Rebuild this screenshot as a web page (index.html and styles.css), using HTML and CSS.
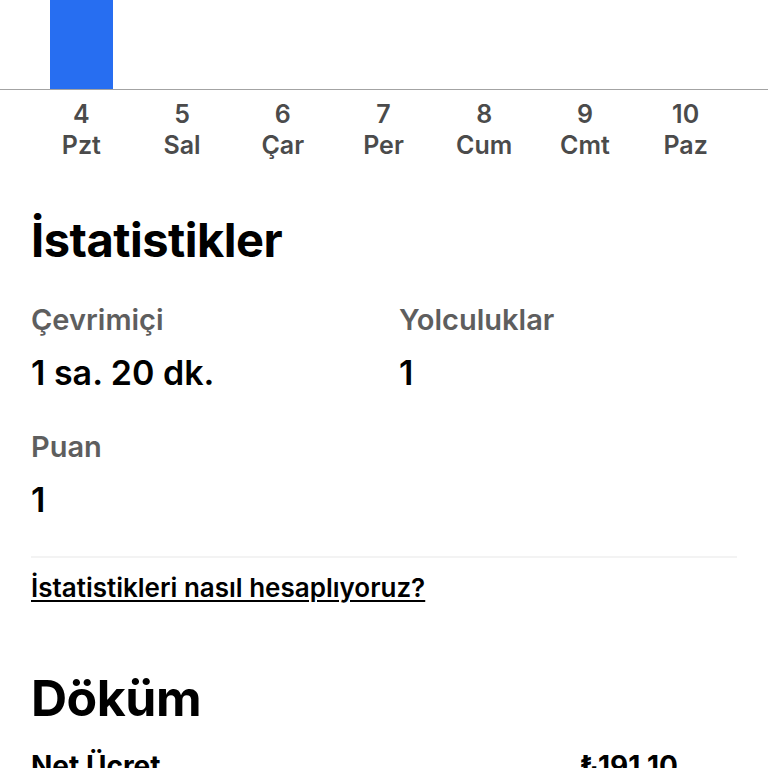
FILE: index.html
```html
<!DOCTYPE html>
<html lang="tr">
<head>
<meta charset="utf-8">
<link rel="stylesheet" href="styles.css">
</head>
<body>
<div class="chart">
  <div class="plot">
    <div class="col"><div class="bar" style="height:90px"></div></div>
    <div class="col"></div>
    <div class="col"></div>
    <div class="col"></div>
    <div class="col"></div>
    <div class="col"></div>
    <div class="col"></div>
  </div>
  <div class="axis">
    <div class="tick"><span>4</span><span>Pzt</span></div>
    <div class="tick"><span>5</span><span>Sal</span></div>
    <div class="tick"><span>6</span><span>Çar</span></div>
    <div class="tick"><span>7</span><span>Per</span></div>
    <div class="tick"><span>8</span><span>Cum</span></div>
    <div class="tick"><span>9</span><span>Cmt</span></div>
    <div class="tick"><span>10</span><span>Paz</span></div>
  </div>
</div>
<section class="stats">
  <h2 class="title">İstatistikler</h2>
  <div class="grid">
    <div class="stat"><div class="label">Çevrimiçi</div><div class="value">1 sa. 20 dk.</div></div>
    <div class="stat"><div class="label">Yolculuklar</div><div class="value">1</div></div>
    <div class="stat"><div class="label">Puan</div><div class="value">1</div></div>
  </div>
  <hr class="divider">
  <a class="link" href="#">İstatistikleri nasıl hesaplıyoruz?</a>
</section>
<section class="breakdown">
  <h2 class="title big">Döküm</h2>
  <div class="row"><span>Net Ücret</span><span>₺191,10</span></div>
</section>
</body>
</html>
```
FILE: styles.css
```css
html, body {
  margin: 0;
  padding: 0;
  background: #fff;
  font-family: Inter, "Noto Sans", sans-serif;
  color: #000;
  overflow: hidden;
  height: 768px;
}
.chart {
  display: flex;
  flex-direction: column;
}
.plot {
  height: 90px;
  display: grid;
  grid-template-columns: repeat(7, 1fr);
  padding: 0 32px 0 31px;
  align-items: end;
}
.col {
  display: flex;
  justify-content: center;
  height: 100%;
  align-items: flex-end;
}
.bar {
  width: 63px;
  background: #276ef1;
}
.axis {
  display: grid;
  grid-template-columns: repeat(7, 1fr);
  padding: 9px 32px 0 31px;
  border-top: 1px solid #a3a3a3;
  margin-top: -1px;
}
.tick {
  display: flex;
  flex-direction: column;
  align-items: center;
  font-size: 25px;
  line-height: 31px;
  font-weight: 600;
  color: #4b4b4b;
}
.stats {
  padding: 0 31px;
}
.title {
  margin: 0;
  font-size: 47px;
  font-weight: 700;
  letter-spacing: -0.5px;
  line-height: 56px;
}
.stats .title {
  margin-top: 51px;
}
.grid {
  display: grid;
  grid-template-columns: 368px 1fr;
  row-gap: 36px;
  margin-top: 34px;
}
.label {
  font-size: 29px;
  line-height: 36px;
  font-weight: 600;
  color: #5e5e5e;
}
.value {
  font-size: 34px;
  line-height: 40px;
  font-weight: 600;
  margin-top: 15px;
}
.divider {
  border: 0;
  border-top: 2px solid #f3f3f3;
  margin: 36px 0 0;
}
.link {
  display: inline-block;
  margin-top: 14px;
  font-size: 26px;
  line-height: 32px;
  font-weight: 600;
  color: #000;
  text-decoration: underline;
  text-underline-offset: 3px;
}
.breakdown {
  padding: 0 31px;
}
.title.big {
  margin-top: 64px;
  font-size: 50px;
  line-height: 60px;
}
.row {
  display: flex;
  justify-content: space-between;
  padding-right: 59px;
  margin-top: 21px;
  font-size: 28px;
  line-height: 34px;
  font-weight: 700;
}
```
